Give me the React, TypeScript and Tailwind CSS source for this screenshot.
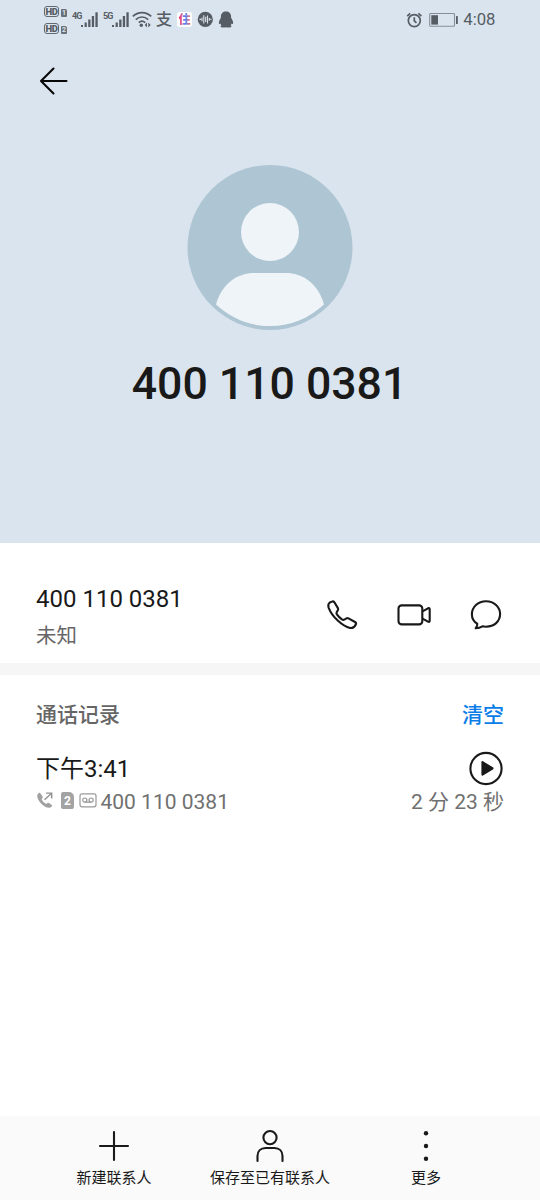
import React from "react";

const sans = "font-['Roboto','Noto_Sans_CJK_SC',sans-serif]";

function HdBadge({ sim }: { sim: string }) {
  return (
    <div className="flex h-[11px] items-end gap-[2px]">
      <span className="flex h-[11px] w-[15px] items-center justify-center rounded-[3px] border-[1.5px] border-[#62686f] text-[9.5px] font-black leading-none tracking-[-0.3px] text-[#565c63]">
        HD
      </span>
      <span className="flex h-[8px] w-[6px] items-center justify-center rounded-[1px] rounded-tr-[2px] bg-[#6a7077] text-[7px] font-bold leading-none text-[#dae4ee]">
        {sim}
      </span>
    </div>
  );
}

function Signal({ label }: { label: string }) {
  return (
    <div className="flex h-4">
      <span className="w-[9px] text-[9px] leading-[8px] font-bold tracking-[-0.8px] text-[#565c63]">{label}</span>
      <svg width="17" height="16" viewBox="0 0 17 16" fill="#565c63">
        <rect x="0" y="13" width="2" height="2" />
        <rect x="3.6" y="10.5" width="2.2" height="4.5" />
        <rect x="7.2" y="7.5" width="2.3" height="7.5" />
        <rect x="10.8" y="4" width="2.3" height="11" />
        <rect x="14.4" y="0.3" width="2.3" height="14.7" />
      </svg>
    </div>
  );
}

function StatusBar() {
  return (
    <div className="flex h-10 w-full items-start text-[#565c63]">
      <div className="ml-[44px] mt-[6px] flex w-[28px] flex-col gap-[6px]">
        <HdBadge sim="1" />
        <HdBadge sim="2" />
      </div>
      <div className="mt-[12px] flex w-[60px] gap-[5px]">
        <Signal label="4G" />
        <Signal label="5G" />
      </div>
      <svg className="mt-[11px]" width="20" height="17" viewBox="0 0 20 17" fill="none" stroke="#565c63" strokeWidth="1.7">
        <path d="M.8 5.4C6 .3 14 .3 19.2 5.4M3.8 8.6C7.4 5.1 12.6 5.1 16.2 8.6M6.8 11.6c1.9-1.8 4.5-1.8 6.4 0" />
        <circle cx="9.3" cy="14.2" r="1.7" fill="#565c63" stroke="none" />
        <path d="m15 11.5-2.2 2.6 2.2 2.5zM16.3 11.5l2.4 2.6-2.4 2.5z" fill="#565c63" stroke="none" />
      </svg>
      <span className="ml-[4px] mt-[12px] w-[17px] text-[16px] font-medium leading-[16px]">支</span>
      <div className="ml-[4px] mt-[12px] flex h-[15px] w-[15px] items-center justify-center rounded-[3px] bg-white">
        <span className="bg-linear-to-r from-[#fb2b6c] from-15% via-[#3d7dff] via-55% to-[#ff5940] bg-clip-text pt-[1px] text-[12px] font-black leading-[13px] text-transparent">
          住
        </span>
      </div>
      <svg className="ml-[5px] mt-[11px]" width="17" height="17" viewBox="0 0 17 17">
        <circle cx="8.3" cy="8.4" r="7.6" fill="#565c63" />
        <path d="M2.5 8.4h1.6M5 6.5v3.8M6.8 4.3v8.2M8.7 5.7v5.4M10.5 4.4v8M12.3 7v2.8M13.3 8.4h1.2" stroke="#dae4ee" strokeWidth="1.1" />
      </svg>
      <svg className="ml-[4px] mt-[11px]" width="16" height="17" viewBox="0 0 16 17" fill="#565c63">
        <path d="M8 .5C4.8.5 2.9 2.6 2.9 5.6v1.2C1.9 8.3.9 10.2.9 12c0 1 .4 1.4 1.2.8l.3-.2c.2.8.5 1.3 1 1.8-.6.3-.9.6-.9 1 0 1.2 3.6 1.3 5.5.9 1.9.4 5.5.3 5.5-.9 0-.4-.3-.7-.9-1 .5-.5.8-1 1-1.8l.3.2c.8.6 1.2.2 1.2-.8 0-1.8-1-3.7-2-5.2V5.6C13.1 2.6 11.2.5 8 .5Z" />
      </svg>
      <div className="ml-auto mr-[44.5px] mt-[10px] flex h-5 items-center">
        <svg width="16" height="17" viewBox="0 0 16 17" fill="none" stroke="#565c63" strokeWidth="1.7">
          <circle cx="8.3" cy="8.6" r="6" />
          <path d="M8.3 5.2v3.6l2.2 2.1M1.2 4.1 4.2 1.3M12.4 1.3l3 2.8" />
        </svg>
        <svg className="ml-[7px]" width="29" height="15" viewBox="0 0 29 15">
          <rect x="0.7" y="0.5" width="24.8" height="12.8" rx="1" fill="none" stroke="#878e97" strokeWidth="1.1" />
          <rect x="2.3" y="2.2" width="6.7" height="9.4" fill="#565c63" />
          <rect x="27" y="3.1" width="1.8" height="7.8" rx=".5" fill="#565c63" />
        </svg>
        <span className="ml-[5px] text-[16.7px] leading-5">4:08</span>
      </div>
    </div>
  );
}

function Avatar() {
  return (
    <svg width="166" height="166" viewBox="0 0 166 166">
      <circle cx="83" cy="82.5" r="82.5" fill="#aec5d3" />
      <circle cx="83" cy="67" r="29" fill="#eef4f7" />
      <path d="M67 108H99C115 108 131 118 137 139.5C122 153 105 161 83 161S44 153 29 139.5C35 118 51 108 67 108Z" fill="#eef4f7" />
    </svg>
  );
}

function ContactActions() {
  return (
    <div className="mt-[54px] flex h-[36px] gap-[36px]">
      <button aria-label="呼叫">
        <svg width="36" height="36" viewBox="0 0 36 36" fill="none" stroke="#191919" strokeWidth="2.1" strokeLinejoin="round">
          <path transform="translate(0 1)" d="M5.8 4.5 8 3.6c1-.4 1.7-.2 2.4.7l3.5 5.8c.5.9.4 1.6-.2 2.4l-1 1.6c-.4.8-.3 1.5.2 2.3 1.3 1.9 3 3.6 5 5 .9.6 1.6.6 2.5.2l2-1.2c.7-.4 1.4-.4 2.1 0l6.5 3.6c1.1.7 1.3 1.5.8 2.5-1.1 2.5-3.3 3.9-5.8 3.4C18.9 28.3 8.2 19.1 4.7 9.8 3.9 7.4 4.1 5.7 5.8 4.5Z" />
        </svg>
      </button>
      <button aria-label="视频">
        <svg width="36" height="36" viewBox="0 0 36 36" fill="none" stroke="#191919" strokeWidth="2.1" strokeLinejoin="round">
          <rect x="2.5" y="8.4" width="23.8" height="19" rx="3.2" />
          <path d="m26.5 14.3 5.5-3c1-.5 1.7-.1 1.7.9v11.6c0 1-.8 1.4-1.7.9l-5.5-3" />
        </svg>
      </button>
      <button aria-label="信息">
        <svg width="36" height="36" viewBox="0 0 36 36" fill="none" stroke="#191919" strokeWidth="2.1" strokeLinejoin="round">
          <path d="M9.2 26.6C5.9 24.6 3.9 21.3 3.9 17.4 3.9 9.9 10 4.2 18 4.2s14.1 5.6 14.1 12.9S26.2 29.7 18 29.7c-1.3 0-2.4-.1-3.6-.4-2 1.2-4 1.8-6.7 2 1.2-1.4 1.8-2.8 1.5-4.7Z" />
        </svg>
      </button>
    </div>
  );
}

function CallIcons() {
  return (
    <div className="flex h-[24px] w-[64px] items-start">
      <svg className="mt-[1px]" width="18" height="18" viewBox="0 0 18 18">
        <path d="M3 2C.7 3.1.8 6.1 2.8 9.4c2.4 3.9 6.5 7.2 10.2 7.3 1.9.1 3-1.2 3.1-2.5l-3.5-2.4c-.9-.5-1.5.4-2.4 1.1-1.8-.9-3.9-3-4.7-5 .9-.6 1.7-1.2 1.1-2.1L4.4 2.2C4 1.7 3.5 1.7 3 2Z" fill="#a1a1a1" />
        <path d="m8.5 8.8 7.1-6.5M10 2.1h5.7v5.5" fill="none" stroke="#929292" strokeWidth="1.4" />
      </svg>
      <span className="ml-[7px] mt-[2px] flex h-[17px] w-[13px] items-center justify-center rounded-[2px] rounded-tr-[5px] bg-[#a3a3a3] text-[12px] font-bold leading-none text-white">2</span>
      <svg className="ml-[5px] mt-[3px]" width="18" height="15" viewBox="0 0 18 15" fill="none" stroke="#999" strokeWidth="1.2">
        <rect x="1" y=".8" width="16" height="13" rx="2" />
        <circle cx="5.8" cy="7.1" r="2.1" />
        <circle cx="12.1" cy="7.1" r="2.1" />
        <path d="M5.8 9.2h6.3" />
      </svg>
    </div>
  );
}

function BottomBar() {
  return (
    <footer className="flex h-[84px] bg-[#fafafa] px-9 text-[15px] leading-[20px] text-[#191919]">
      <button className="flex flex-1 flex-col items-center pt-[12px]">
        <svg width="36" height="36" viewBox="0 0 36 36" fill="none" stroke="#191919" strokeWidth="2.1" strokeLinecap="round">
          <path d="M18 4v28M4 18h28" />
        </svg>
        <span className="mt-[4px]">新建联系人</span>
      </button>
      <button className="flex flex-1 flex-col items-center pt-[12px]">
        <svg width="36" height="36" viewBox="0 0 36 36" fill="none" stroke="#191919" strokeWidth="2.1" strokeLinecap="round">
          <circle cx="18" cy="9.6" r="6.6" />
          <path d="M5.5 33v-5c0-4.8 3.2-8 8-8h9c4.8 0 8 3.2 8 8v5" />
        </svg>
        <span className="mt-[4px]">保存至已有联系人</span>
      </button>
      <button className="flex flex-1 flex-col items-center pt-[12px]">
        <svg width="36" height="36" viewBox="0 0 36 36" fill="#191919">
          <circle cx="18" cy="5.2" r="2.2" />
          <circle cx="18" cy="18" r="2.2" />
          <circle cx="18" cy="30.8" r="2.2" />
        </svg>
        <span className="mt-[4px]">更多</span>
      </button>
    </footer>
  );
}

export default function App() {
  return (
    <div className={`${sans} flex h-[1200px] w-[540px] flex-col overflow-hidden bg-white text-[#191919]`}>
      <header className="flex h-[543px] flex-col items-center bg-[#dae4ee]">
        <StatusBar />
        <button aria-label="返回" className="ml-[36px] mt-[23px] self-start">
          <svg width="36" height="36" viewBox="0 0 36 36" fill="none" stroke="#080808" strokeWidth="2.1" strokeLinecap="round" strokeLinejoin="round">
            <path d="M30.5 18H5M17.5 5.5 5 18l12.5 12.5" />
          </svg>
        </button>
        <div className="mt-[66px]">
          <Avatar />
        </div>
        <h1 className="mr-[1px] mt-[23px] text-[44.6px] font-medium leading-[60px]">400 110 0381</h1>
      </header>
      <section className="flex h-[120px] justify-between pl-9 pr-9">
        <div>
          <p className="mt-[40px] text-[24px] leading-[32px]">400 110 0381</p>
          <p className="mt-[7px] text-[20.5px] leading-[28px] text-[#666]">未知</p>
        </div>
        <ContactActions />
      </section>
      <div className="h-[12px] bg-[#f6f6f6]" />
      <main className="flex-1 px-9 pt-[26px]">
        <div className="flex h-[30px] items-center justify-between text-[21px] font-medium">
          <h2 className="text-[#666]">通话记录</h2>
          <button className="text-[#0a7de9]">清空</button>
        </div>
        <div className="mt-[20px] flex h-[36px] items-center justify-between">
          <span className="text-[24px] leading-9">下午3:41</span>
          <button aria-label="播放">
            <svg width="36" height="36" viewBox="0 0 36 36">
              <circle cx="18" cy="17.5" r="15.6" fill="none" stroke="#191919" strokeWidth="2.1" />
              <path d="M13.4 11.1c0-1 .8-1.3 1.6-.8l9.9 6c1 .6 1 1.5 0 2.1l-9.9 6c-.8.5-1.6.2-1.6-.8Z" fill="#191919" />
            </svg>
          </button>
        </div>
        <div className="mt-[3px] flex h-[24px] justify-between text-[21px] leading-[24px] text-[#707070]">
          <div className="flex">
            <CallIcons />
            <span className="ml-[0.5px]">400 110 0381</span>
          </div>
          <span>2 分 23 秒</span>
        </div>
      </main>
      <BottomBar />
    </div>
  );
}
